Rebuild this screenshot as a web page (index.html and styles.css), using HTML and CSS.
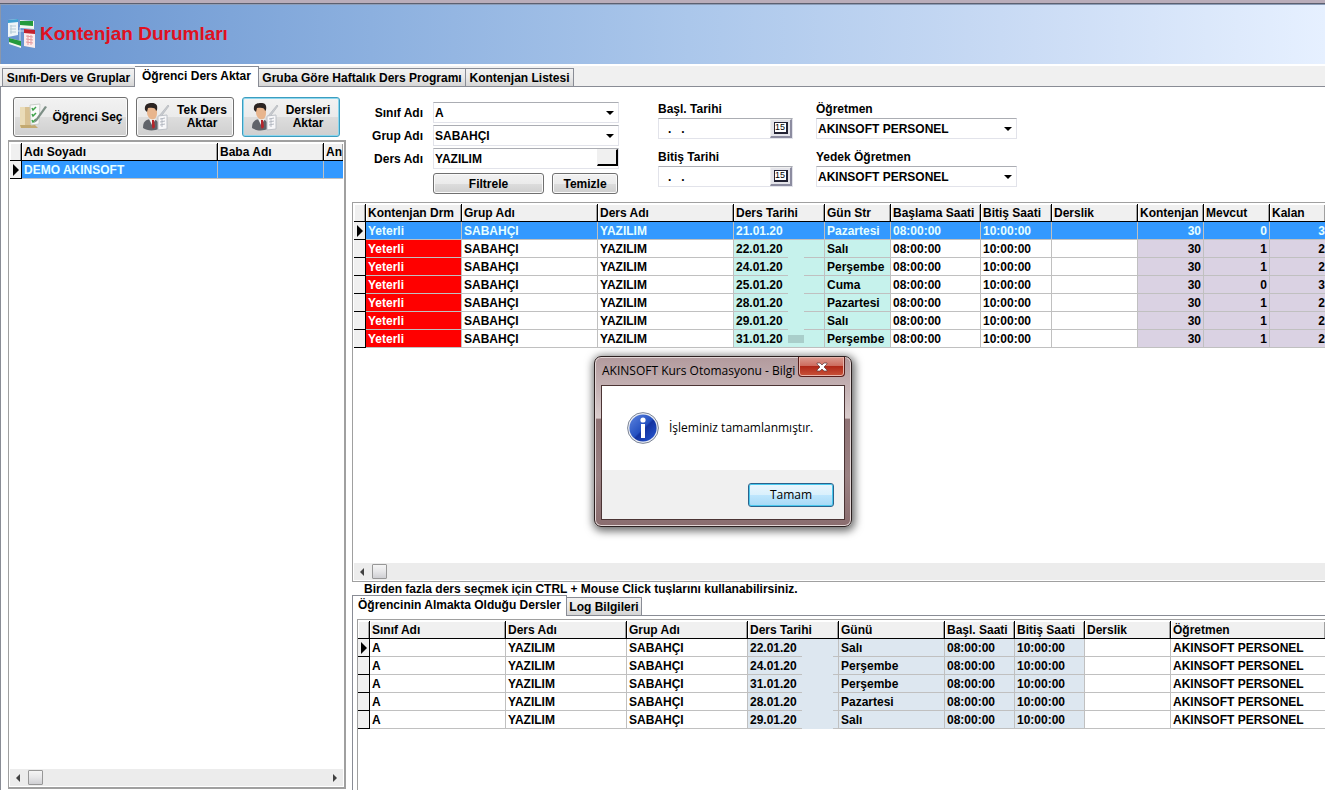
FILE: index.html
```html
<!DOCTYPE html>
<html lang="tr">
<head>
  <meta charset="utf-8">
  <title>Kontenjan Durumları</title>
  <link rel="stylesheet" href="styles.css">
</head>
<body>

  <header class="header">
    <svg class="logo" width="30" height="32" viewBox="0 0 30 32">
      <path d="M10 13h8M13 9v14" stroke="#cfe0f2" stroke-width="1" fill="none"/>
      <path d="M1 2l10-1v16l-10 2z" fill="#eef5f8"/>
      <path d="M1 2l10-1v3l-10 1z" fill="#3c9fd0"/>
      <path d="M3 8h6M3 11h6M3 14h6M4 7v9" stroke="#b4cbd6" stroke-width="1"/>
      <path d="M13 2l14 1v8l-14-1z" fill="#f2f7ef"/>
      <path d="M13 3l13 0v5l-13-1z" fill="#259a3b"/>
      <path d="M2 20l12 3v7l-12-4z" fill="#f2f7ef"/>
      <path d="M2 20l12 3v5l-12-4z" fill="#259a3b"/>
      <path d="M17 11l11 1v18l-11-2z" fill="#fbecec"/>
      <path d="M17 11l11 1v4l-11-1z" fill="#c4202c"/>
      <path d="M19 18l7 1M19 21l7 1M19 24l7 1M21 17v10M24 17v10" stroke="#e59a9f" stroke-width="1"/>
    </svg>
    <h1>Kontenjan Durumları</h1>
  </header>

  <nav class="tabs">
    <button class="tab t1">Sınıfı-Ders ve Gruplar</button>
    <button class="tab t2 active">Öğrenci Ders Aktar</button>
    <button class="tab t3">Gruba Göre Haftalık Ders Programı</button>
    <button class="tab t4">Kontenjan Listesi</button>
  </nav>

  <main class="page">

    <!-- Öğrenci listesi -->
    <section class="left">
      <div class="toolbar">
        <button class="btn big wide">
          <svg width="30" height="30" viewBox="0 0 30 30">
            <path d="M2 5h14v20l-14 1z" fill="#d8c193"/>
            <path d="M2 5h5v21h-5z" fill="#eadcb8"/>
            <path d="M2 23h15l3 3H3z" fill="#c3a970"/>
            <path d="M12 3l10-1-1 20-8 1z" fill="#fafafa" stroke="#c9cfc9" stroke-width="1"/>
            <path d="M14 6l1 2 3-3M14 12l1 2 3-3M14 18l1 2 3-3" fill="none" stroke="#3fa34a" stroke-width="1.5"/>
            <path d="M27 4L17 18l-1 3 3-2L29 5z" fill="#7d8f86"/>
          </svg>
          <span>Öğrenci Seç</span>
        </button>
        <button class="btn big">
          <svg width="28" height="30" viewBox="0 0 28 30"><use href="#person"/></svg>
          <span>Tek Ders<br>Aktar</span>
        </button>
        <button class="btn big focus">
          <svg width="28" height="30" viewBox="0 0 28 30"><use href="#person"/></svg>
          <span>Dersleri<br>Aktar</span>
        </button>
      </div>

      <div class="list">
        <table class="grid">
          <colgroup><col class="w12"><col class="w196"><col class="w106"><col></colgroup>
          <thead>
            <tr><th></th><th>Adı Soyadı</th><th>Baba Adı</th><th>An</th></tr>
          </thead>
          <tbody>
            <tr class="selected"><td class="ind current"></td><td>DEMO AKINSOFT</td><td></td><td></td></tr>
          </tbody>
        </table>
        <div class="scroll">
          <i class="arrow prev"></i><i class="thumb"></i><i class="arrow next"></i>
        </div>
      </div>
    </section>

    <section class="right">
      <form class="filters">
        <div class="fields">
          <label for="sinif">Sınıf Adı</label>
          <div class="combo"><select id="sinif"><option>A</option></select></div>
          <label for="grup">Grup Adı</label>
          <div class="combo"><select id="grup"><option>SABAHÇI</option></select></div>
          <label for="ders">Ders Adı</label>
          <div class="box"><input id="ders" type="text" value="YAZILIM"><button type="button" class="pick" aria-label="Ders"></button></div>
          <div class="actions">
            <button type="button" class="btn filter">Filtrele</button>
            <button type="button" class="btn clear">Temizle</button>
          </div>
        </div>
        <div class="dates">
          <label for="basl">Başl. Tarihi</label>
          <div class="box date-box"><input id="basl" type="text" value=".   ."><button type="button" class="cal"><span>15</span></button></div>
          <label for="bitis">Bitiş Tarihi</label>
          <div class="box date-box"><input id="bitis" type="text" value=".   ."><button type="button" class="cal"><span>15</span></button></div>
        </div>
        <div class="teachers">
          <label for="ogretmen">Öğretmen</label>
          <div class="combo"><select id="ogretmen"><option>AKINSOFT PERSONEL</option></select></div>
          <label for="yedek">Yedek Öğretmen</label>
          <div class="combo"><select id="yedek"><option>AKINSOFT PERSONEL</option></select></div>
        </div>
      </form>

      <!-- Ders programı -->
      <div class="lessons">
        <table class="grid">
          <colgroup>
            <col class="w12"><col class="w96"><col class="w136"><col class="w136"><col class="w91"><col class="w66"><col class="w90"><col class="w71"><col class="w86"><col class="w66"><col class="w66"><col>
          </colgroup>
          <thead>
            <tr><th></th><th>Kontenjan Drm</th><th>Grup Adı</th><th>Ders Adı</th><th>Ders Tarihi</th><th>Gün Str</th><th>Başlama Saati</th><th>Bitiş Saati</th><th>Derslik</th><th>Kontenjan</th><th>Mevcut</th><th>Kalan</th></tr>
          </thead>
          <tbody>
            <tr class="selected"><td class="ind current"></td><td class="state">Yeterli</td><td>SABAHÇI</td><td>YAZILIM</td><td class="day">21.01.20</td><td class="day">Pazartesi</td><td>08:00:00</td><td>10:00:00</td><td></td><td class="num">30</td><td class="num">0</td><td class="num last">3</td></tr>
            <tr><td class="ind"></td><td class="state">Yeterli</td><td>SABAHÇI</td><td>YAZILIM</td><td class="day date">22.01.20</td><td class="day">Salı</td><td>08:00:00</td><td>10:00:00</td><td></td><td class="num">30</td><td class="num">1</td><td class="num last">2</td></tr>
            <tr><td class="ind"></td><td class="state">Yeterli</td><td>SABAHÇI</td><td>YAZILIM</td><td class="day date">24.01.20</td><td class="day">Perşembe</td><td>08:00:00</td><td>10:00:00</td><td></td><td class="num">30</td><td class="num">1</td><td class="num last">2</td></tr>
            <tr><td class="ind"></td><td class="state">Yeterli</td><td>SABAHÇI</td><td>YAZILIM</td><td class="day date">25.01.20</td><td class="day">Cuma</td><td>08:00:00</td><td>10:00:00</td><td></td><td class="num">30</td><td class="num">0</td><td class="num last">3</td></tr>
            <tr><td class="ind"></td><td class="state">Yeterli</td><td>SABAHÇI</td><td>YAZILIM</td><td class="day date">28.01.20</td><td class="day">Pazartesi</td><td>08:00:00</td><td>10:00:00</td><td></td><td class="num">30</td><td class="num">1</td><td class="num last">2</td></tr>
            <tr><td class="ind"></td><td class="state">Yeterli</td><td>SABAHÇI</td><td>YAZILIM</td><td class="day date">29.01.20</td><td class="day">Salı</td><td>08:00:00</td><td>10:00:00</td><td></td><td class="num">30</td><td class="num">1</td><td class="num last">2</td></tr>
            <tr><td class="ind"></td><td class="state">Yeterli</td><td>SABAHÇI</td><td>YAZILIM</td><td class="day date mark">31.01.20</td><td class="day">Perşembe</td><td>08:00:00</td><td>10:00:00</td><td></td><td class="num">30</td><td class="num">1</td><td class="num last">2</td></tr>
          </tbody>
        </table>
        <div class="scroll">
          <i class="arrow prev"></i><i class="thumb"></i>
        </div>
      </div>

      <p class="hint">Birden fazla ders seçmek için CTRL + Mouse Click tuşlarını kullanabilirsiniz.</p>

      <!-- Öğrencinin dersleri -->
      <div class="tabs sub">
        <button class="tab s1 active">Öğrencinin Almakta Olduğu Dersler</button>
        <button class="tab s2">Log Bilgileri</button>
      </div>
      <div class="subpage">
        <div class="taken">
          <table class="grid">
            <colgroup>
              <col class="w12"><col class="w136"><col class="w121"><col class="w121"><col class="w91"><col class="w106"><col class="w70"><col class="w70"><col class="w86"><col>
            </colgroup>
            <thead>
              <tr><th></th><th>Sınıf Adı</th><th>Ders Adı</th><th>Grup Adı</th><th>Ders Tarihi</th><th>Günü</th><th>Başl. Saati</th><th>Bitiş Saati</th><th>Derslik</th><th>Öğretmen</th></tr>
            </thead>
            <tbody>
              <tr><td class="ind current"></td><td>A</td><td>YAZILIM</td><td>SABAHÇI</td><td class="time date">22.01.20</td><td class="time">Salı</td><td class="time">08:00:00</td><td class="time">10:00:00</td><td></td><td>AKINSOFT PERSONEL</td></tr>
              <tr><td class="ind"></td><td>A</td><td>YAZILIM</td><td>SABAHÇI</td><td class="time date">24.01.20</td><td class="time">Perşembe</td><td class="time">08:00:00</td><td class="time">10:00:00</td><td></td><td>AKINSOFT PERSONEL</td></tr>
              <tr><td class="ind"></td><td>A</td><td>YAZILIM</td><td>SABAHÇI</td><td class="time date">31.01.20</td><td class="time">Perşembe</td><td class="time">08:00:00</td><td class="time">10:00:00</td><td></td><td>AKINSOFT PERSONEL</td></tr>
              <tr><td class="ind"></td><td>A</td><td>YAZILIM</td><td>SABAHÇI</td><td class="time date">28.01.20</td><td class="time">Pazartesi</td><td class="time">08:00:00</td><td class="time">10:00:00</td><td></td><td>AKINSOFT PERSONEL</td></tr>
              <tr><td class="ind"></td><td>A</td><td>YAZILIM</td><td>SABAHÇI</td><td class="time date">29.01.20</td><td class="time">Salı</td><td class="time">08:00:00</td><td class="time">10:00:00</td><td></td><td>AKINSOFT PERSONEL</td></tr>
            </tbody>
          </table>
        </div>
      </div>
    </section>
  </main>

  <div class="dialog" role="dialog" aria-labelledby="dlgTitle">
    <div class="dialog-title">
      <span id="dlgTitle">AKINSOFT Kurs Otomasyonu - Bilgi</span>
      <button class="close" aria-label="Kapat">
        <svg width="12" height="10" viewBox="0 0 12 10">
          <path d="M1 1h3l2 2 2-2h3v1L8 5l3 3v1H8L6 7 4 9H1V8l3-3-3-3z" fill="#fff" stroke="#5c3a3a" stroke-width="0.7"/>
        </svg>
      </button>
    </div>
    <div class="dialog-body">
      <div class="message">
        <svg width="32" height="32" viewBox="0 0 32 32">
          <defs>
            <linearGradient id="info" x1="0" y1="0" x2="1" y2="1">
              <stop offset="0" stop-color="#5f86e0"/>
              <stop offset="0.5" stop-color="#2450c0"/>
              <stop offset="0.55" stop-color="#1433a0"/>
              <stop offset="1" stop-color="#2a5cd6"/>
            </linearGradient>
          </defs>
          <circle cx="16" cy="16" r="15.4" fill="#e9edf4" stroke="#7d8596" stroke-width="1"/>
          <circle cx="16" cy="16" r="13.6" fill="url(#info)"/>
          <circle cx="16" cy="8" r="2.6" fill="#fff"/>
          <path d="M14 12h4v14h-4z" fill="#fff"/>
        </svg>
        <span>İşleminiz tamamlanmıştır.</span>
      </div>
      <div class="dialog-foot">
        <button class="ok">Tamam</button>
      </div>
    </div>
  </div>

  <svg class="defs" width="0" height="0">
    <symbol id="person" viewBox="0 0 28 30">
      <path d="M0 26c0-6 2-8 7-9h3c5 1 6 4 6 10-5 2-12 2-16-1z" fill="#606369"/>
      <path d="M6 17l3 6 4-6z" fill="#f0f0f0"/>
      <path d="M9 18l2 0 1 7-2 2-1-2z" fill="#b5262c"/>
      <path d="M4 7c0-5 10-6 10 0v4c0 9-9 8-10 0z" fill="#e8b58d"/>
      <path d="M2 8C1 2 5 1 9 1s6 2 5 7l-1 1c0-3-3-4-8-3l-1 4z" fill="#2b2422"/>
      <path d="M25 3l1 1-9 12-2 1 1-3z" fill="#c8cbd0" stroke="#a3a7ad" stroke-width="0.5"/>
      <path d="M15 14l9-1v14l-9 1z" fill="#f7f7f9" stroke="#bcc0c6" stroke-width="1"/>
      <path d="M17 17l5-1M17 20l5-1M17 23l5-1M19 16v9" stroke="#b4b9c2" stroke-width="1"/>
    </symbol>
  </svg>

</body>
</html>
```

FILE: styles.css
```css
* {
  box-sizing: border-box;
}

body {
  margin: 0;
  height: 100vh;
  display: flex;
  flex-direction: column;
  overflow: hidden;
  background: #fff;
  color: #000;
  font: bold 12px/16px "Liberation Sans", Arial, sans-serif;
}

button, input, select {
  font: inherit;
  color: inherit;
  margin: 0;
}

/* header */
.header {
  flex: none;
  height: 66px;
  display: flex;
  align-items: center;
  gap: 3px;
  padding-left: 7px;
  border-top: 3px solid #b9adba;
  border-bottom: 2px solid #fff;
  box-shadow: inset 0 1px 0 #5c6070, inset 0 2px 0 #8c9db8, inset 1px 0 0 #8b97ab;
  background: linear-gradient(to right, #6793cf, #8cb0df 28%, #abc7eb 52%, #cbdcf5 78%, #e6f0ff);
}

.header h1 {
  margin: 0;
  font-size: 19px;
  line-height: 24px;
  color: #e01020;
}

/* tabs */
.tabs {
  flex: none;
  display: flex;
  align-items: flex-end;
  height: 21px;
  padding: 0 0 0 2px;
  border-bottom: 1px solid #898c95;
  background: #f0f0f0;
}

.tab {
  height: 18px;
  padding: 0;
  border: 1px solid #898c95;
  border-left-width: 0;
  border-bottom: 0;
  background: linear-gradient(#f2f2f2, #e9e9e9 50%, #d5d5d5);
  white-space: nowrap;
}

.tab:first-child {
  border-left-width: 1px;
}

.tab.active {
  height: 21px;
  margin-bottom: -1px;
  padding-bottom: 3px;
  background: #fff;
}

.t1 { width: 133px; }
.t2 { width: 124px; }
.t3 { width: 207px; }
.t4 { width: 108px; }

.page {
  flex: 1;
  min-height: 0;
  display: flex;
  gap: 6px;
  border-left: 1px solid #898c95;
}

/* buttons */
.btn {
  border: 1px solid #707070;
  border-radius: 3px;
  padding: 0;
  background: linear-gradient(#f2f2f2, #ebebeb 50%, #dddddd 50%, #cfcfcf);
  box-shadow: inset 0 0 0 1px #fafafa;
}

.btn.big {
  height: 40px;
  width: 98px;
  display: flex;
  align-items: center;
  justify-content: center;
  gap: 6px;
  line-height: 13px;
}

.btn.wide {
  width: 115px;
  gap: 4px;
}

.btn.focus {
  border-color: #3c9dbf;
  box-shadow: inset 0 0 0 1px #8bd6ee;
}

/* left */
.left {
  width: 338px;
  margin-left: 7px;
  padding-top: 10px;
  display: flex;
  flex-direction: column;
}

.toolbar {
  display: flex;
  gap: 8px;
  padding: 0 0 3px 5px;
}

.list {
  flex: 1;
  display: flex;
  flex-direction: column;
  justify-content: space-between;
  margin-bottom: 1px;
  padding: 1px;
  border: 1px solid #a0a0a0;
  border-top-width: 2px;
  border-right-width: 2px;
  border-bottom-width: 2px;
}

/* grids */
.grid {
  width: 100%;
  table-layout: fixed;
  border-collapse: separate;
  border-spacing: 0;
}

.grid th,
.grid td {
  height: 18px;
  padding: 0 2px;
  line-height: 16px;
  text-align: left;
  white-space: nowrap;
  overflow: hidden;
  border-right: 1px solid #c0c0c0;
  border-bottom: 1px solid #c0c0c0;
}

.grid th {
  background: #f0f0f0;
  border-right-color: #000;
  border-bottom-color: #000;
  box-shadow: inset 1px 1px 0 #fff, inset -1px 0 0 #a0a0a0;
}

.grid td:last-child,
.grid th:last-child {
  border-right: 0;
}

.grid .ind {
  padding: 0;
  background: #f0f0f0;
  border-right-color: #000;
  border-bottom-color: #000;
}

.current::after {
  content: "";
  display: block;
  margin-left: 3px;
  width: 0;
  border: 6px solid transparent;
  border-left-color: #000;
  border-right-width: 0;
}

.grid .state {
  background: #f00;
  color: #fff;
}

.grid .day {
  background: #c6f2ec;
}

.grid .time {
  background: #dde7f0;
}

.grid .num {
  background: #dad2e3;
  text-align: right;
}

.grid .last {
  padding-right: 0;
}

.grid .selected td:not(.ind) {
  background: #3399ff;
  color: #e6ffff;
}

.grid .date {
  position: relative;
  overflow: visible;
}

/* blank patch where the year is hidden */
.date::after {
  content: "";
  position: absolute;
  left: 54px;
  top: 0;
  width: 16px;
  height: 18px;
  background: #c6f2ec;
}

.time.date::after {
  width: 31px;
  background: #dde7f0;
}

.day.mark::after {
  top: 5px;
  height: 8px;
  background: #a9ceca;
}

.w12 { width: 12px; }
.w66 { width: 66px; }
.w70 { width: 70px; }
.w71 { width: 71px; }
.w86 { width: 86px; }
.w90 { width: 90px; }
.w91 { width: 91px; }
.w96 { width: 96px; }
.w106 { width: 106px; }
.w121 { width: 121px; }
.w136 { width: 136px; }
.w196 { width: 196px; }

/* scrollbars */
.scroll {
  height: 17px;
  display: flex;
  align-items: center;
  padding: 0 6px;
  background: #ececec;
}

.arrow {
  border: 4px solid transparent;
}

.prev {
  border-left-width: 0;
  border-right-color: #404040;
}

.next {
  margin-left: auto;
  border-right-width: 0;
  border-left-color: #404040;
}

.thumb {
  width: 15px;
  height: 15px;
  margin-left: 8px;
  border: 1px solid #979797;
  border-radius: 1px;
  background: linear-gradient(#f5f5f5, #e6e6e8 50%, #cfcfd3);
}

/* right */
.right {
  flex: 1;
  min-width: 0;
  display: flex;
  flex-direction: column;
}

.filters {
  height: 115px;
  display: flex;
  padding-top: 14px;
}

.fields {
  width: 267px;
  display: grid;
  grid-template-columns: 71px 186px;
  grid-auto-rows: 21px;
  gap: 2px 10px;
  align-content: start;
  align-items: center;
  justify-content: end;
  padding-top: 1px;
}

.fields label {
  text-align: right;
}

.actions {
  grid-column: 2;
  display: flex;
  gap: 8px;
  padding-top: 4px;
}

.actions .btn {
  height: 21px;
}

.filter { width: 111px; }
.clear { width: 66px; }

.combo,
.box {
  height: 21px;
  display: flex;
  position: relative;
  border: 1px solid #e2e3ea;
  border-top-color: #abadb3;
  background: #fff;
}

.combo select,
.box input {
  flex: 1;
  min-width: 0;
  padding: 0 1px;
  border: 0;
  outline: 0;
  background: transparent;
  appearance: none;
}

.combo::after {
  content: "";
  position: absolute;
  right: 4px;
  top: 8px;
  border: 4px solid transparent;
  border-top-color: #000;
  border-bottom-width: 0;
  pointer-events: none;
}

.pick {
  width: 21px;
  height: 17px;
  padding: 0;
  border: 1px solid #f0f0f0;
  border-right: 2px solid #000;
  border-bottom: 2px solid #000;
  background: #f0f0f0;
}

.dates,
.teachers {
  display: flex;
  flex-direction: column;
}

.dates {
  width: 135px;
  margin-left: 39px;
}

.teachers {
  width: 201px;
  margin-left: 23px;
}

.dates label,
.teachers label {
  height: 17px;
}

.dates .box,
.teachers .combo {
  margin-bottom: 10px;
}

.date-box input {
  padding-left: 9px;
}

.cal {
  width: 22px;
  height: 19px;
  padding: 0;
  display: flex;
  align-items: center;
  justify-content: center;
  border: 1px solid #f0f0f0;
  border-right: 2px solid #8c8ca0;
  border-bottom: 2px solid #8c8ca0;
  background: #e4e4ea;
}

.cal span {
  width: 14px;
  height: 12px;
  border: 1px solid #223;
  border-right-width: 2px;
  border-bottom-width: 2px;
  background: #fff;
  font: 9px/9px "Liberation Sans", Arial, sans-serif;
}

.lessons {
  flex: none;
  height: 380px;
  display: flex;
  flex-direction: column;
  justify-content: space-between;
  padding: 1px 0 1px 1px;
  border: 1px solid #a0a0a0;
  border-right: 0;
}

.hint {
  margin: 0;
  padding-left: 12px;
  height: 13px;
  line-height: 14px;
}

.sub {
  padding: 0;
  background: #fff;
}

.sub .active {
  height: 21px;
}

.s1 { width: 215px; }
.s2 { width: 75px; }

.subpage {
  flex: 1;
  display: flex;
  padding: 3px 0 0 4px;
  border-left: 1px solid #898c95;
}

.taken {
  flex: 1;
  padding: 1px 0 0 0;
  border: 1px solid #a0a0a0;
  border-right: 0;
  border-bottom: 0;
}

/* message box */
.dialog {
  position: absolute;
  left: 594px;
  top: 356px;
  width: 258px;
  padding: 0 6px 6px;
  border: 1px solid #2b2020;
  border-radius: 7px;
  background: linear-gradient(#b29a9d, #c6b4b6 20%, #d9cccc 36%, #8f7375 37%, #9a8183 70%, #8a6d6f);
  box-shadow: inset 0 0 0 1px #e3d6d6, 1px 2px 8px 2px rgba(0, 0, 0, 0.6);
  font: 12px/16px "Open Sans", "Noto Sans", sans-serif;
}

.dialog-title {
  height: 28px;
  display: flex;
  justify-content: space-between;
  padding-left: 1px;
  white-space: nowrap;
}

.dialog-title span {
  padding-top: 6px;
}

.close {
  width: 47px;
  height: 20px;
  padding: 0;
  display: flex;
  align-items: center;
  justify-content: center;
  border: 1px solid #5a1e1c;
  border-top: 0;
  border-radius: 0 0 4px 4px;
  background: linear-gradient(#dc9b91, #cc6a5c 48%, #b02818 50%, #c9533a);
  box-shadow: inset 0 0 0 1px #e8b5ab;
}

.dialog-body {
  border: 1px solid #4b3434;
  background: #fff;
}

.message {
  height: 84px;
  display: flex;
  align-items: center;
  gap: 10px;
  padding-left: 25px;
}

.dialog-foot {
  height: 49px;
  display: flex;
  justify-content: flex-end;
  align-items: center;
  padding-right: 10px;
  background: #f0f0f0;
}

.ok {
  width: 86px;
  height: 24px;
  padding: 0;
  border: 1px solid #2c628b;
  border-radius: 3px;
  background: linear-gradient(#eaf6fd, #d9f0fc 50%, #bee6fd 50%, #a7d9f5);
  box-shadow: inset 0 0 0 1px #48c8ee;
}

.defs {
  position: absolute;
}
```
